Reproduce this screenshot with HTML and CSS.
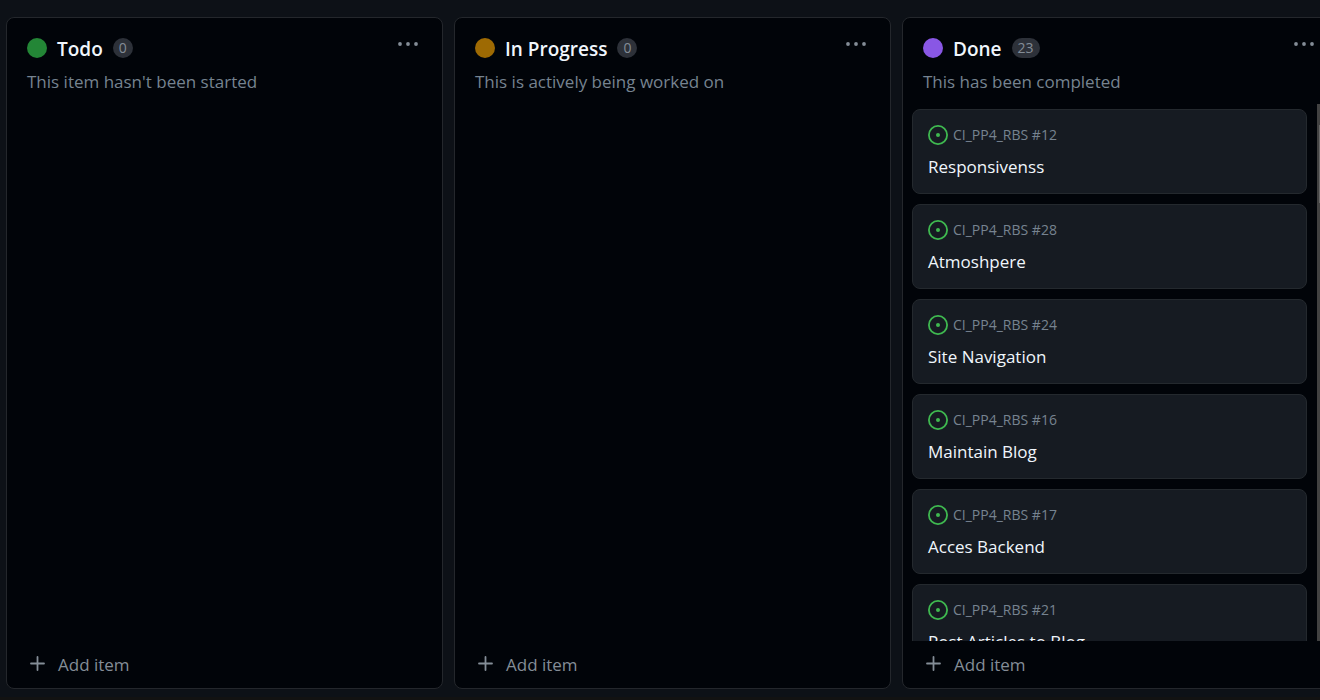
FILE: index.html
```
<!DOCTYPE html>
<html lang="en">
<head>
<meta charset="utf-8">
<title>Project board</title>
<link rel="stylesheet" href="styles.css">
</head>
<body>
<svg class="sprite" width="0" height="0" aria-hidden="true">
  <symbol id="dots" viewBox="0 0 20 4"><circle cx="2" cy="2" r="1.9"/><circle cx="10" cy="2" r="1.9"/><circle cx="18" cy="2" r="1.9"/></symbol>
  <symbol id="plus" viewBox="0 0 15 15"><path d="M7.5 1v13M1 7.5h13" fill="none" stroke="currentColor" stroke-width="1.8" stroke-linecap="round"/></symbol>
  <symbol id="open" viewBox="0 0 20 20"><circle cx="10" cy="10" r="9.1" fill="none" stroke="currentColor" stroke-width="1.8"/><circle cx="10" cy="10" r="2"/></symbol>
</svg>
<main class="board">
  <section class="column">
    <header class="head">
      <div class="title-row">
        <span class="dot dot-green"></span>
        <h2 class="title">Todo</h2>
        <span class="count">0</span>
        <button class="menu" aria-label="Todo actions"><svg class="icon-dots"><use href="#dots"/></svg></button>
      </div>
      <p class="desc">This item hasn't been started</p>
    </header>
    <div class="body"></div>
    <button class="add"><svg class="icon-plus"><use href="#plus"/></svg>Add item</button>
  </section>
  <section class="column">
    <header class="head">
      <div class="title-row">
        <span class="dot dot-amber"></span>
        <h2 class="title">In Progress</h2>
        <span class="count">0</span>
        <button class="menu" aria-label="In Progress actions"><svg class="icon-dots"><use href="#dots"/></svg></button>
      </div>
      <p class="desc">This is actively being worked on</p>
    </header>
    <div class="body"></div>
    <button class="add"><svg class="icon-plus"><use href="#plus"/></svg>Add item</button>
  </section>
  <section class="column">
    <header class="head">
      <div class="title-row">
        <span class="dot dot-purple"></span>
        <h2 class="title">Done</h2>
        <span class="count">23</span>
        <button class="menu" aria-label="Done actions"><svg class="icon-dots"><use href="#dots"/></svg></button>
      </div>
      <p class="desc">This has been completed</p>
    </header>
    <div class="body">
      <div class="cards">
        <article class="card"><div class="ref"><svg class="icon-open"><use href="#open"/></svg>CI_PP4_RBS #12</div><h3 class="name">Responsivenss</h3></article>
        <article class="card"><div class="ref"><svg class="icon-open"><use href="#open"/></svg>CI_PP4_RBS #28</div><h3 class="name">Atmoshpere</h3></article>
        <article class="card"><div class="ref"><svg class="icon-open"><use href="#open"/></svg>CI_PP4_RBS #24</div><h3 class="name">Site Navigation</h3></article>
        <article class="card"><div class="ref"><svg class="icon-open"><use href="#open"/></svg>CI_PP4_RBS #16</div><h3 class="name">Maintain Blog</h3></article>
        <article class="card"><div class="ref"><svg class="icon-open"><use href="#open"/></svg>CI_PP4_RBS #17</div><h3 class="name">Acces Backend</h3></article>
        <article class="card"><div class="ref"><svg class="icon-open"><use href="#open"/></svg>CI_PP4_RBS #21</div><h3 class="name">Post Articles to Blog</h3></article>
      </div>
      <div class="track"><div class="thumb"></div></div>
    </div>
    <button class="add"><svg class="icon-plus"><use href="#plus"/></svg>Add item</button>
  </section>
</main>
</body>
</html>
```
FILE: styles.css
```
* { box-sizing: border-box; }
body {
  margin: 0;
  height: 100vh;
  overflow: hidden;
  background: #0d1117;
  border-bottom: 3px solid #121212;
  font-family: "Segoe UI", "Open Sans", "Noto Sans", sans-serif;
  font-size: 17px;
  color: #f0f6fc;
}
.sprite { display: none; }
svg { flex: none; fill: currentColor; }
button { background: none; border: 0; padding: 0; font: inherit; color: #848d97; cursor: pointer; }
h2, h3, p { margin: 0; }
.board { display: flex; gap: 11px; height: 100%; padding: 17px 3px 8px 6px; }
.column {
  flex: 0 0 calc(100% / 3);
  display: flex;
  flex-direction: column;
  background: #010409;
  border: 1px solid #24272c;
  border-radius: 8px;
  overflow: hidden;
}
.head { padding: 18px 20px 10px; }
.title-row { display: flex; align-items: center; height: 24px; }
.dot { width: 20px; height: 20px; border-radius: 50%; }
.dot-green { background: #238636; }
.dot-amber { background: #9e6a03; }
.dot-purple { background: #8957e5; }
.title { margin: 0 10px 0 10px; padding-top: 1px; font-size: 19px; line-height: 24px; font-weight: 600; }
.count {
  min-width: 20px;
  padding: 0 6px;
  border-radius: 10px;
  background: #2d3139;
  color: #848d97;
  font-size: 14px;
  line-height: 20px;
  font-weight: 500;
  text-align: center;
}
.menu { align-self: flex-start; display: flex; margin-left: auto; padding: 6px 4px; }
.icon-dots { width: 20px; height: 4px; }
.desc { margin-top: 10px; line-height: 24px; color: #768390; }
.body { flex: 1; min-height: 0; display: flex; overflow: hidden; }
.cards { flex: 1; display: flex; flex-direction: column; gap: 10px; padding: 5px 10px 0 9px; }
.card { flex: none; padding: 14px 15px; background: #161b22; border: 1px solid #24292e; border-radius: 8px; }
.ref { display: flex; align-items: center; gap: 5px; line-height: 22px; font-size: 14px; color: #768390; }
.icon-open { width: 20px; height: 20px; color: #3fb950; }
.name { margin-top: 9px; font-size: 17px; line-height: 24px; font-weight: 400; }
.track { flex: none; width: 21px; padding: 21px 2px; background: #424242; }
.thumb { height: 78px; background: #686868; }
.add { display: flex; align-items: center; gap: 13px; height: 47px; padding: 0 23px; font-weight: 500; }
.icon-plus { width: 15px; height: 15px; margin-bottom: 3px; }
```
